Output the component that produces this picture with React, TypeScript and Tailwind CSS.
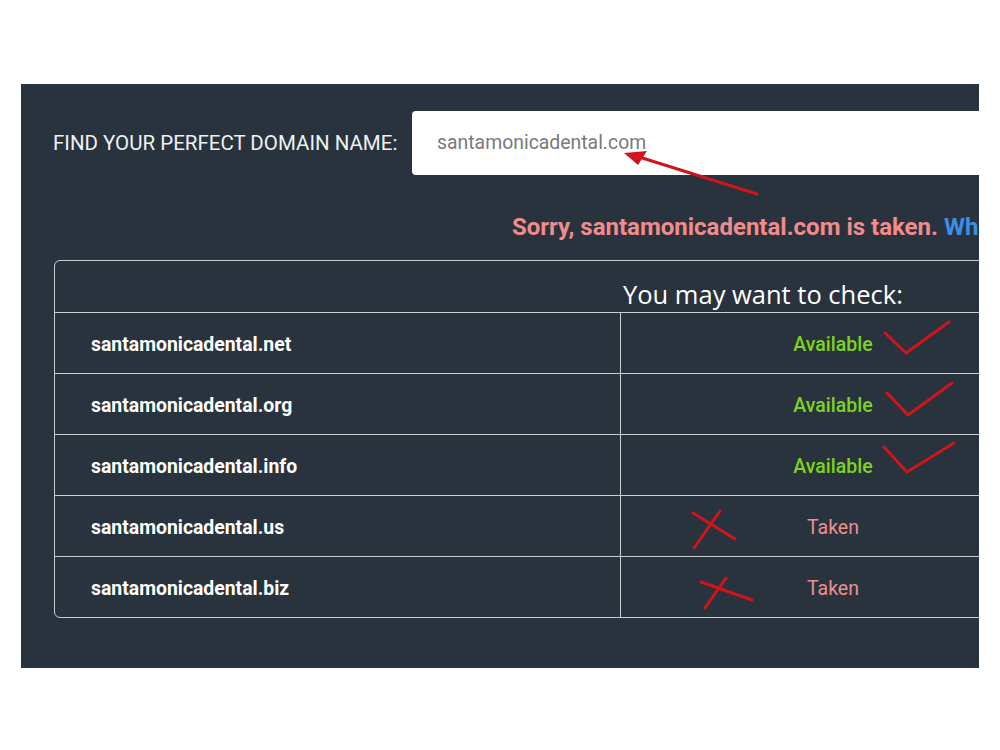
import React from 'react';

type Row = { name: string; available: boolean };

const rows: Row[] = [
  { name: 'santamonicadental.net', available: true },
  { name: 'santamonicadental.org', available: true },
  { name: 'santamonicadental.info', available: true },
  { name: 'santamonicadental.us', available: false },
  { name: 'santamonicadental.biz', available: false },
];

const Marks = () => (
  <svg
    className="absolute left-0 top-0 pointer-events-none"
    width={1000}
    height={750}
    viewBox="0 0 1000 750"
  >
    <g stroke="#d0141c" strokeWidth={3} fill="none" strokeLinecap="round" strokeLinejoin="round">
      {/* arrow */}
      <line x1={757} y1={194} x2={636} y2={156} />
      {/* checks */}
      <polyline points="885,333 906,353 949,322" />
      <polyline points="887,393 908,415 952,383" />
      <polyline points="884,447 907,472 954,443" />
      {/* crosses */}
      <line x1={693} y1={513} x2={735} y2={539} />
      <line x1={720} y1={511} x2={694} y2={548} />
      <line x1={701} y1={582} x2={752} y2={600} />
      <line x1={726} y1={578} x2={705} y2={608} />
    </g>
    <polygon points="624,153 647,151 638,165" fill="#d0141c" />
  </svg>
);

const App = () => {
  return (
    <div
      className="relative w-[1000px] h-[750px] bg-white overflow-hidden"
      style={{ fontFamily: 'Roboto, "Liberation Sans", sans-serif' }}
    >
      <div className="ml-[21px] mt-[84px] w-[958px] h-[584px] bg-[#29333d] overflow-hidden pt-[27px]">
        {/* search row */}
        <div className="flex items-center pl-[32px]">
          <p className="w-[359px] shrink-0 text-[20.5px] text-[#eef0f2] uppercase whitespace-nowrap">
            Find your perfect domain name:
          </p>
          <div className="w-[700px] shrink-0 h-[64px] rounded-[4px] bg-white flex items-center pl-[25px] text-[19.4px] text-[#7a7a7a]">
            santamonicadental.com
          </div>
        </div>

        {/* result message */}
        <p className="mt-[38px] pl-[491px] leading-[28px] text-[24px] font-bold whitespace-nowrap text-[#f28b8b]">
          Sorry, santamonicadental.com is taken.{' '}
          <span className="text-[#3b8fe6]">What about these?</span>
        </p>

        {/* suggestions table */}
        <div className="mt-[19px] ml-[33px] w-[992px] border border-[#c9cdd1] rounded-[6px]">
          <div
            className="h-[52px] border-b border-[#c9cdd1] pl-[568px] pt-[17px] leading-[32px] text-[25.5px] text-white whitespace-nowrap"
            style={{ fontFamily: '"Open Sans", "Noto Sans", sans-serif' }}
          >
            You may want to check:
          </div>
          {rows.map((row, i) => (
            <div
              key={row.name}
              className={
                i < rows.length - 1
                  ? 'flex h-[61px] pt-[3px] border-b border-[#c9cdd1]'
                  : 'flex h-[60px] pt-[3px]'
              }
            >
              <div className="w-[566px] shrink-0 border-r border-[#c9cdd1] -mt-[3px] pt-[3px] flex items-center pl-[36px] text-[19.4px] font-bold text-white">
                {row.name}
              </div>
              <div
                className={
                  row.available
                    ? 'flex-1 flex items-center justify-center text-[19.5px] font-medium text-[#7ed321]'
                    : 'flex-1 flex items-center justify-center text-[19.5px] font-normal text-[#ee8f8f]'
                }
              >
                {row.available ? 'Available' : 'Taken'}
              </div>
            </div>
          ))}
        </div>
      </div>
      <Marks />
    </div>
  );
};

export default App;
